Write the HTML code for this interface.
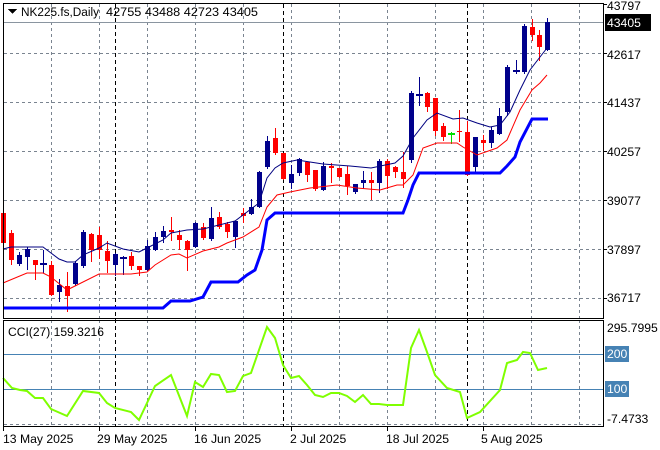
<!DOCTYPE html>
<html><head><meta charset="utf-8"><style>
html,body{margin:0;padding:0;background:#fff}
svg{display:block;font-family:"Liberation Sans",sans-serif;font-size:12.2px}
</style></head><body>
<svg width="660" height="450" viewBox="0 0 660 450" xmlns="http://www.w3.org/2000/svg" shape-rendering="crispEdges">
<g stroke="#7a8490" stroke-dasharray="3,3" stroke-width="1">
<path d="M51.5 4V318M99.5 4V318M147.5 4V318M195.5 4V318M243.5 4V318M291.5 4V318M339.5 4V318M387.5 4V318M435.5 4V318M483.5 4V318M531.5 4V318M579.5 4V318"/>
<path d="M51.5 320V426M99.5 320V426M147.5 320V426M195.5 320V426M243.5 320V426M291.5 320V426M339.5 320V426M387.5 320V426M435.5 320V426M483.5 320V426M531.5 320V426M579.5 320V426"/>
<path d="M4 53.5H603M4 102.5H603M4 151.5H603M4 200.5H603M4 249.5H603M4 298.5H603M4 424.5H603"/>
</g>
<g stroke="#000" stroke-dasharray="4,3"><path d="M115.5 4V426M283.5 4V426M467.5 4V426"/></g>
<path d="M4 22.5H603" stroke="#8a95a0"/>
<path d="M4 354.5H603M4 389.5H603" stroke="#4682b4"/>
<g id="c" shape-rendering="crispEdges"></g>
<g fill="none" shape-rendering="auto">
<polyline stroke="#000080" stroke-width="1" points="3,249 11,247 27,247 43,247 51,253 59,259 67,262 75,262 83,255 99,248 107,243 123,249 139,252 147,248 163,240 171,233 187,230 203,229 235,221 243,215 259,203 267,178 275,168 283,163 297,160 323,164 350,166 371,168 395,163 403,156 413,138 427,120 437,113 453,119 463,118 477,123 490,127 500,125 510,112 520,90 530,70 540,57 547,48"/>
<polyline stroke="#ff0000" stroke-width="1" points="3,283 27,273 43,273 51,277 67,290 75,286 99,274 131,274 147,272 155,265 171,255 179,254 187,258 203,251 219,247 227,243 243,237 259,227 267,207 277,195 290,192 310,188 337,185 357,188 380,190 397,185 403,185 413,175 423,148 437,143 457,143 463,147 477,155 497,148 507,140 520,110 532,90 540,83 547,75"/>
<polyline stroke="#0000ff" stroke-width="3" points="3,308 163,308 171,301 190,301 203,297 211,282 238,282 247,275 255,270 262,250 267,220 275,213 403,213 408,200 413,185 419,173 500,173 507,166 515,157 520,142 532,119 548,119"/>
<polyline stroke="#7fff00" stroke-width="2" points="3,378 12,388 20,390 27,391 35,398 43,398 51,409 67,416 83,391 99,393 107,403 115,408 131,412 139,420 155,386 171,375 187,416 195,382 203,387 211,374 219,375 227,392 235,391 243,376 251,373 267,327 275,338 283,365 291,378 299,376 307,385 315,395 323,397 331,393 339,393 347,396 355,402 363,395 371,404 379,404 387,405 395,405 403,405 411,348 419,330 427,352 435,375 447,388 460,392 467,418 480,412 500,390 507,363 517,360 523,352 530,353 538,370 547,368"/>
</g>
<g fill="none" stroke="#000" stroke-width="1">
<rect x="3.5" y="3.5" width="600" height="315"/>
<rect x="3.5" y="320.5" width="600" height="106"/>
</g>
<g fill="#000">
<path d="M8 9h9l-4.5 5z"/>
<text x="21" y="16" textLength="78" lengthAdjust="spacingAndGlyphs">NK225.fs,Daily</text>
<text x="106" y="16" textLength="152" lengthAdjust="spacingAndGlyphs">42755 43488 42723 43405</text>
<text x="8" y="336" textLength="96" lengthAdjust="spacingAndGlyphs">CCI(27) 159.3216</text>
<text x="607" y="10">43797</text>
<text x="607" y="59">42617</text>
<text x="607" y="107">41437</text>
<text x="607" y="156">40257</text>
<text x="607" y="205">39077</text>
<text x="607" y="254">37897</text>
<text x="607" y="302">36717</text>
<text x="607" y="332">295.7995</text>
<text x="607" y="423">-7.4733</text>
<text x="3" y="443">13 May 2025</text>
<text x="97" y="443">29 May 2025</text>
<text x="194" y="443">16 Jun 2025</text>
<text x="290" y="443">2 Jul 2025</text>
<text x="386" y="443">18 Jul 2025</text>
<text x="481" y="443">5 Aug 2025</text>
</g>
<path d="M3.5 427v4M99.5 427v4M195.5 427v4M291.5 427v4M387.5 427v4M483.5 427v4" stroke="#000"/>
<path d="M603 4.5h4M603 53.5h4M603 102.5h4M603 151.5h4M603 200.5h4M603 249.5h4M603 298.5h4" stroke="#000"/>
<rect x="605" y="14" width="46" height="17" fill="#000"/>
<text x="607" y="27" fill="#fff">43405</text>
<rect x="605" y="346" width="24" height="16" fill="#4682b4"/>
<text x="607" y="358" fill="#fff">200</text>
<rect x="605" y="381" width="24" height="16" fill="#4682b4"/>
<text x="607" y="393" fill="#fff">100</text>
</svg>
<script>
var d=[
[3,'r',213,243,213,243],[11,'r',233,260,230,264],[19,'b',255,264,252,265],[27,'b',249,257,247,269],[35,'r',260,265,260,279],[43,'b',263,263,250,272],[51,'r',265,295,261,295],[59,'b',285,292,279,301],[67,'r',286,296,272,311],[75,'b',263,284,261,285],[83,'b',232,266,230,267],[91,'r',234,250,233,261],[99,'r',235,250,227,258],[107,'r',251,261,241,272],[115,'b',254,265,253,275],[123,'b',257,257,256,274],[131,'r',256,266,252,269],[139,'r',266,270,266,275],[147,'b',246,270,240,270],[155,'b',237,250,232,250],[163,'b',231,237,226,242],[171,'r',230,232,217,240],[179,'r',235,240,230,249],[187,'r',241,250,240,270],[195,'b',223,247,222,247],[203,'r',227,238,223,239],[211,'b',218,239,207,240],[219,'r',217,227,212,228],[227,'r',224,232,222,237],[235,'b',221,237,221,247],[243,'r',213,216,208,222],[251,'b',207,214,199,214],[259,'b',172,207,171,207],[267,'b',141,167,136,168],[275,'r',138,153,128,154],
[283,'r',153,179,153,179],[291,'b',174,183,165,188],[299,'b',159,173,158,175],[307,'r',162,175,162,181],[315,'r',170,189,170,190],[323,'b',166,190,162,190],[331,'r',166,168,163,182],[339,'r',168,177,168,177],[347,'r',174,186,166,194],[355,'b',184,192,184,193],[363,'b',180,183,171,188],[371,'r',180,183,172,199],[379,'b',161,183,159,192],[387,'r',161,176,159,188],[395,'r',167,172,166,177],[403,'r',172,179,152,187],[411,'b',93,160,91,162],[419,'b',94,94,77,105],[427,'r',93,107,92,111],[435,'r',98,131,98,135],[443,'r',126,137,123,140],[451,'g',133,133,132,143],[459,'r',131,132,110,141],[467,'r',132,175,121,175],[475,'b',137,167,137,173],[483,'r',140,143,135,150],[491,'b',130,143,127,147],[499,'b',116,134,108,134],[507,'b',67,112,65,115],[516,'b',70,70,60,73],[524,'b',26,72,24,73],[532,'r',27,35,19,40],[539,'r',35,47,30,60],[547,'b',22,50,18,50]];
var g=document.getElementById('c'),h='';
d.forEach(function(c){var col=c[1]=='r'?'#ff0000':c[1]=='b'?'#00008b':'#00e000';var x=c[0];
h+='<rect x="'+x+'" y="'+c[4]+'" width="1" height="'+(c[5]-c[4]+1)+'" fill="'+col+'"/>';
var hb=Math.max(1,c[3]-c[2]);
if(c[2]==c[3]) h+='<rect x="'+(x-3)+'" y="'+c[2]+'" width="7" height="2" fill="'+col+'"/>';
else h+='<rect x="'+(x-2)+'" y="'+c[2]+'" width="5" height="'+hb+'" fill="'+col+'"/>';});
g.innerHTML=h;
</script>
</body></html>
